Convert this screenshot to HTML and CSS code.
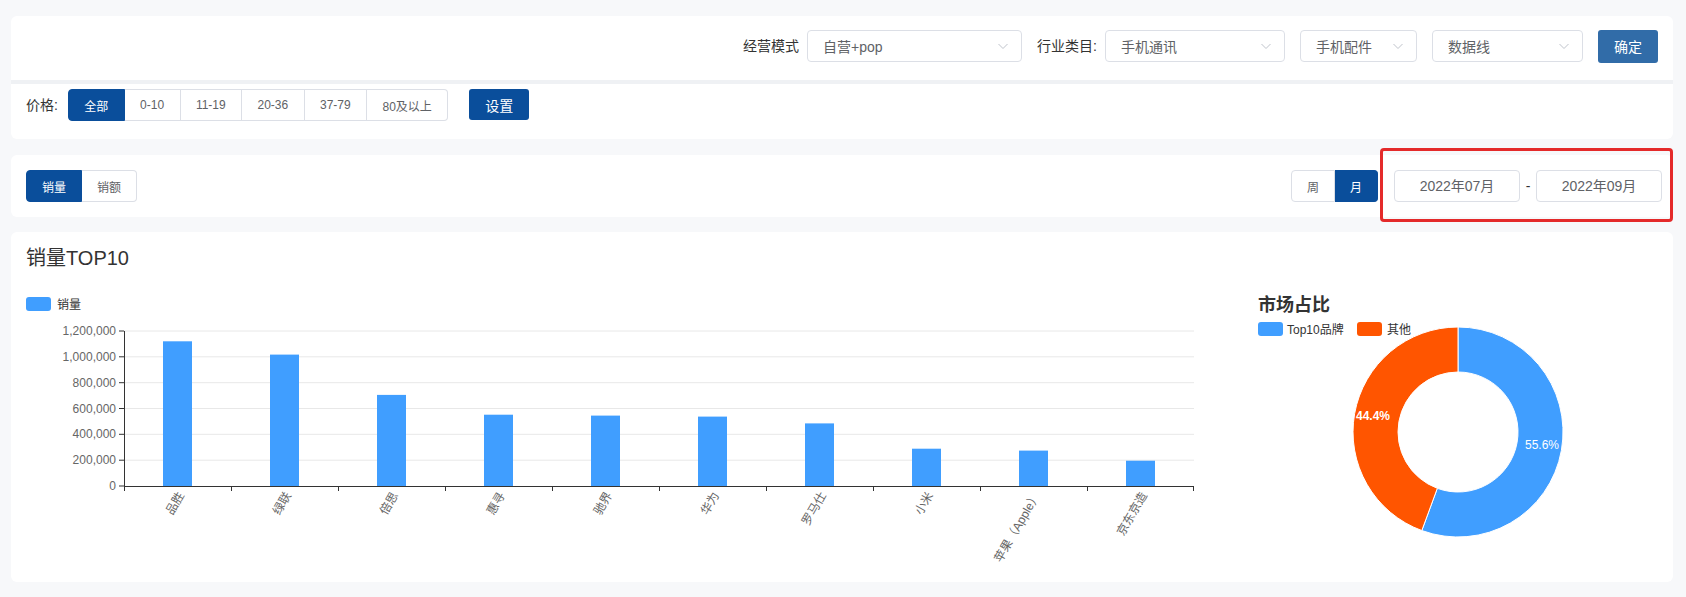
FILE: index.html
```html
<!DOCTYPE html>
<html lang="zh-CN">
<head>
    <meta charset="UTF-8">
    <meta name="viewport" content="width=device-width, initial-scale=1.0">
    <title>销量TOP10</title>
    <link rel="stylesheet" href="styles.css">
</head>
<body>
    <div class="page">
        <div class="card filter-card">
            <div class="filter-top">
                <span class="label">经营模式</span>
                <div class="select select-mode">
                    <span>自营+pop</span>
                    <svg class="chevron" viewBox="0 0 12 12"><path d="M1.5 4 L6 8.5 L10.5 4"/></svg>
                </div>
                <span class="label label-cat">行业类目:</span>
                <div class="select select-cat1">
                    <span>手机通讯</span>
                    <svg class="chevron" viewBox="0 0 12 12"><path d="M1.5 4 L6 8.5 L10.5 4"/></svg>
                </div>
                <div class="select select-cat2">
                    <span>手机配件</span>
                    <svg class="chevron" viewBox="0 0 12 12"><path d="M1.5 4 L6 8.5 L10.5 4"/></svg>
                </div>
                <div class="select select-cat3">
                    <span>数据线</span>
                    <svg class="chevron" viewBox="0 0 12 12"><path d="M1.5 4 L6 8.5 L10.5 4"/></svg>
                </div>
                <button class="btn btn-confirm">确定</button>
            </div>
            <div class="filter-price">
                <span class="label">价格:</span>
                <div class="btn-group price-group">
                    <button class="active">全部</button>
                    <button>0-10</button>
                    <button>11-19</button>
                    <button>20-36</button>
                    <button>37-79</button>
                    <button>80及以上</button>
                </div>
                <button class="btn btn-set">设置</button>
            </div>
        </div>

        <div class="card toolbar-card">
            <div class="btn-group">
                <button class="active">销量</button>
                <button>销额</button>
            </div>
            <div class="toolbar-right">
                <div class="btn-group">
                    <button>周</button>
                    <button class="active">月</button>
                </div>
                <div class="date-range">
                    <div class="date-input">2022年07月</div>
                    <span class="date-sep">-</span>
                    <div class="date-input">2022年09月</div>
                </div>
            </div>
        </div>

        <div class="card chart-card">
            <h2 class="chart-title">销量TOP10</h2>
            <div class="chart-row">
                <svg class="bar-chart" width="1200" height="292" viewBox="0 0 1200 292">
                    <rect x="0" y="7" width="25" height="14" rx="3" fill="#409eff"/>
                    <text class="legend-text" x="31" y="18.5">销量</text>

                    <g class="grid">
                        <line x1="98" y1="41" x2="1168" y2="41"/>
                        <line x1="98" y1="66.8" x2="1168" y2="66.8"/>
                        <line x1="98" y1="92.7" x2="1168" y2="92.7"/>
                        <line x1="98" y1="118.5" x2="1168" y2="118.5"/>
                        <line x1="98" y1="144.3" x2="1168" y2="144.3"/>
                        <line x1="98" y1="170.2" x2="1168" y2="170.2"/>
                    </g>

                    <g class="axis">
                        <line x1="98.5" y1="41" x2="98.5" y2="196"/>
                        <line x1="93" y1="41" x2="98" y2="41"/>
                        <line x1="93" y1="66.8" x2="98" y2="66.8"/>
                        <line x1="93" y1="92.7" x2="98" y2="92.7"/>
                        <line x1="93" y1="118.5" x2="98" y2="118.5"/>
                        <line x1="93" y1="144.3" x2="98" y2="144.3"/>
                        <line x1="93" y1="170.2" x2="98" y2="170.2"/>
                        <line x1="93" y1="196" x2="98" y2="196"/>
                    </g>

                    <g class="y-labels">
                        <text x="90" y="45">1,200,000</text>
                        <text x="90" y="70.8">1,000,000</text>
                        <text x="90" y="96.7">800,000</text>
                        <text x="90" y="122.5">600,000</text>
                        <text x="90" y="148.3">400,000</text>
                        <text x="90" y="174.2">200,000</text>
                        <text x="90" y="200">0</text>
                    </g>

                    <g fill="#409eff">
                        <rect x="137" y="51.3" width="29" height="144.7"/>
                        <rect x="244" y="64.6" width="29" height="131.4"/>
                        <rect x="351" y="104.9" width="29" height="91.1"/>
                        <rect x="458" y="124.7" width="29" height="71.3"/>
                        <rect x="565" y="125.6" width="29" height="70.4"/>
                        <rect x="672" y="126.6" width="29" height="69.4"/>
                        <rect x="779" y="133.4" width="29" height="62.6"/>
                        <rect x="886" y="158.7" width="29" height="37.3"/>
                        <rect x="993" y="160.6" width="29" height="35.4"/>
                        <rect x="1100" y="170.7" width="29" height="25.3"/>
                    </g>

                    <g class="axis">
                        <line x1="98" y1="196.5" x2="1168" y2="196.5"/>
                        <line x1="98.5" y1="196" x2="98.5" y2="201"/>
                        <line x1="205.5" y1="196" x2="205.5" y2="201"/>
                        <line x1="312.5" y1="196" x2="312.5" y2="201"/>
                        <line x1="419.5" y1="196" x2="419.5" y2="201"/>
                        <line x1="526.5" y1="196" x2="526.5" y2="201"/>
                        <line x1="633.5" y1="196" x2="633.5" y2="201"/>
                        <line x1="740.5" y1="196" x2="740.5" y2="201"/>
                        <line x1="847.5" y1="196" x2="847.5" y2="201"/>
                        <line x1="954.5" y1="196" x2="954.5" y2="201"/>
                        <line x1="1061.5" y1="196" x2="1061.5" y2="201"/>
                        <line x1="1167.5" y1="196" x2="1167.5" y2="201"/>
                    </g>

                    <g class="x-labels">
                        <text transform="translate(155 203) rotate(-60)">品胜</text>
                        <text transform="translate(262 203) rotate(-60)">绿联</text>
                        <text transform="translate(369 203) rotate(-60)">倍思</text>
                        <text transform="translate(476 203) rotate(-60)">惠寻</text>
                        <text transform="translate(583 203) rotate(-60)">驰界</text>
                        <text transform="translate(690 203) rotate(-60)">华为</text>
                        <text transform="translate(797 203) rotate(-60)">罗马仕</text>
                        <text transform="translate(904 203) rotate(-60)">小米</text>
                        <text transform="translate(1011 203) rotate(-60)">苹果（Apple）</text>
                        <text transform="translate(1118 203) rotate(-60)">京东京造</text>
                    </g>
                </svg>

                <svg class="pie-chart" width="432" height="292" viewBox="0 0 432 292">
                    <text class="pie-title" x="32" y="21">市场占比</text>
                    <rect x="32" y="32" width="25" height="14" rx="3" fill="#409eff"/>
                    <text class="legend-text" x="61" y="43.5">Top10品牌</text>
                    <rect x="131" y="32" width="25" height="14" rx="3" fill="#ff5500"/>
                    <text class="legend-text" x="161" y="43.5">其他</text>

                    <path fill="#409eff" stroke="#fff" stroke-width="1"
                          d="M232 37 A105 105 0 1 1 195.81 240.56 L211.32 198.32 A60 60 0 1 0 232 82 Z"/>
                    <path fill="#ff5500" stroke="#fff" stroke-width="1"
                          d="M195.81 240.56 A105 105 0 0 1 232 37 L232 82 A60 60 0 0 0 211.32 198.32 Z"/>

                    <text class="pie-label bold" x="147" y="130">44.4%</text>
                    <text class="pie-label" x="316" y="159">55.6%</text>
                </svg>
            </div>
        </div>
    </div>
</body>
</html>
```

FILE: styles.css
```css
* {
    box-sizing: border-box;
}
body {
    margin: 0;
    background: #f7f8fa;
    font-family: "Liberation Sans", "Noto Sans CJK SC", sans-serif;
    color: #333;
}
.page {
    padding: 16px 13px 15px 11px;
}
.card {
    background: #fff;
    border-radius: 6px;
}

/* filters */
.filter-card {
    overflow: hidden;
    margin-bottom: 16px;
}
.filter-top {
    height: 68px;
    padding: 0 15px 4px 0;
    display: flex;
    align-items: center;
    justify-content: flex-end;
    border-bottom: 4px solid #eff1f4;
}
.label {
    font-size: 14px;
    line-height: 20px;
    color: #333;
    margin-right: 8px;
    white-space: nowrap;
}
.label-cat {
    margin-left: 15px;
}
.select {
    height: 32px;
    border: 1px solid #dcdfe6;
    border-radius: 4px;
    padding: 0 12px 0 15px;
    display: flex;
    align-items: center;
    justify-content: space-between;
    font-size: 14px;
    color: #606266;
}
.select + .select {
    margin-left: 15px;
}
.select-mode { width: 215px; }
.select-cat1 { width: 180px; }
.select-cat2 { width: 117px; }
.select-cat3 { width: 151px; }
.chevron {
    width: 12px;
    height: 12px;
    fill: none;
    stroke: #c0c4cc;
    stroke-width: 1;
}
.btn {
    border: none;
    border-radius: 3px;
    color: #fff;
    font-family: inherit;
    font-size: 14px;
    cursor: pointer;
}
.btn-confirm {
    width: 60px;
    height: 33px;
    margin-left: 15px;
    background: #316ca8;
}
.btn-set {
    width: 60px;
    height: 31px;
    margin-left: 21px;
    background: #0a4e9b;
}
.filter-price {
    height: 55px;
    padding: 5px 0 0 15px;
    display: flex;
    align-items: flex-start;
}
.filter-price .label {
    line-height: 32px;
    margin-right: 10px;
}

/* button group */
.btn-group {
    display: flex;
}
.btn-group button {
    height: 32px;
    padding: 0 15px;
    border: 1px solid #dcdfe6;
    border-left-width: 0;
    background: #fff;
    color: #606266;
    font-family: inherit;
    font-size: 12px;
    cursor: pointer;
}
.price-group button {
    padding: 0 15.4px;
}
.btn-group button:first-child {
    border-left-width: 1px;
    border-radius: 4px 0 0 4px;
}
.btn-group button:last-child {
    border-radius: 0 4px 4px 0;
}
.btn-group button.active {
    background: #0a4e9b;
    border-color: #0a4e9b;
    color: #fff;
}

/* toolbar */
.toolbar-card {
    padding: 15px 11px 15px 15px;
    display: flex;
    justify-content: space-between;
    align-items: center;
    margin-bottom: 15px;
}
.toolbar-right {
    display: flex;
    align-items: center;
}
.date-range {
    position: relative;
    display: flex;
    align-items: center;
    margin-left: 16px;
}
.date-range::after {
    content: "";
    position: absolute;
    top: -22px;
    bottom: -20px;
    left: -14px;
    right: -11px;
    border: 3px solid #e42a2a;
    border-radius: 4px;
}
.date-input {
    width: 126px;
    height: 32px;
    border: 1px solid #dcdfe6;
    border-radius: 4px;
    font-size: 14px;
    line-height: 30px;
    text-align: center;
    color: #606266;
}
.date-sep {
    width: 16px;
    text-align: center;
    font-size: 14px;
    color: #333;
}

/* charts */
.chart-card {
    padding: 12px 15px 0;
}
.chart-title {
    margin: 0;
    font-size: 20px;
    font-weight: normal;
    line-height: 28px;
    color: #333;
}
.chart-row {
    display: flex;
    margin-top: 18px;
}
.chart-row svg {
    display: block;
}
.legend-text {
    font-size: 12px;
    fill: #333;
}
.grid line {
    stroke: #e8e8e8;
    stroke-width: 1;
}
.axis line {
    stroke: #333;
    stroke-width: 1;
}
.y-labels text {
    font-size: 12px;
    fill: #666;
    text-anchor: end;
}
.x-labels text {
    font-size: 12px;
    fill: #666;
    text-anchor: end;
    dominant-baseline: central;
}
.pie-title {
    font-size: 18px;
    font-weight: bold;
    fill: #333;
}
.pie-label {
    font-size: 12px;
    fill: #fff;
    text-anchor: middle;
}
.pie-label.bold {
    font-weight: bold;
}
```
